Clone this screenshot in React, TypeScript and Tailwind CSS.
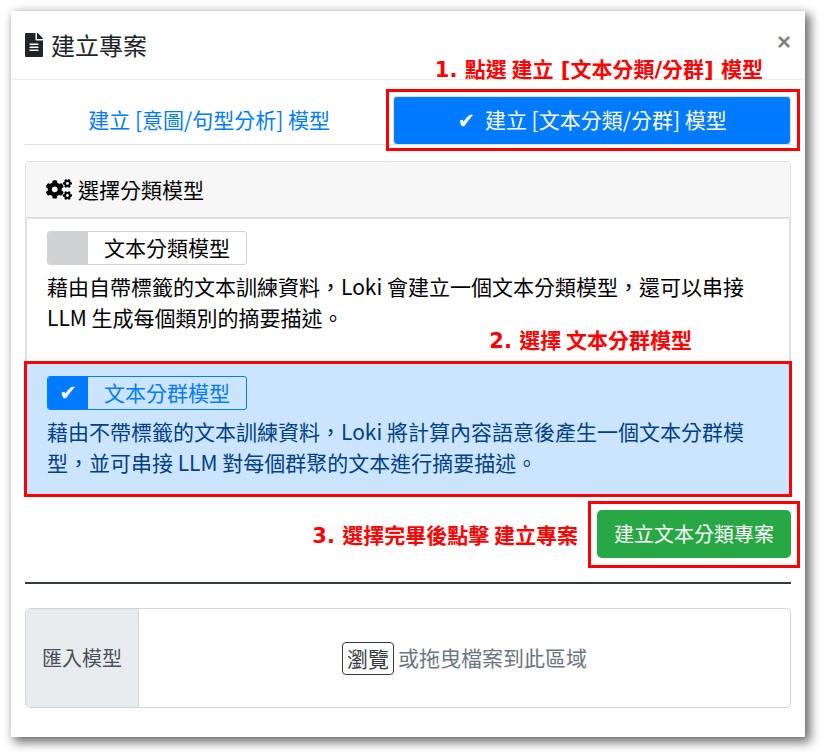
import { useState, type ReactNode } from "react";
import { FaCogs, FaFileAlt } from "react-icons/fa";

function Note({ number, children, className }: { number: number; children: ReactNode; className: string }) {
  return (
    <p
      className={`pointer-events-none absolute whitespace-pre font-['Noto_Sans_CJK_TC',sans-serif] text-[21px] leading-6 font-bold text-[#f00] ${className}`}
    >
      <span className="font-['DejaVu_Sans',sans-serif]">{number}. </span>
      {children}
    </p>
  );
}

function Latin({ children }: { children: ReactNode }) {
  return <span className="font-['DejaVu_Sans',sans-serif]">{children}</span>;
}

function Frame({ className }: { className: string }) {
  return <div className={`pointer-events-none absolute border-3 border-[#f00] ${className}`} />;
}

const tick =
  "before:font-['DejaVu_Sans',sans-serif] before:text-[21px] before:leading-none before:text-white checked:before:content-['✔']";

function ModelOption({
  title,
  text,
  checked,
  onSelect,
  className,
}: {
  title: string;
  text: string;
  checked: boolean;
  onSelect: () => void;
  className: string;
}) {
  return (
    <div
      className={`border px-5 pt-3 ${checked ? "border-[#b8daff] bg-[#cce5ff] text-[#004085]" : "border-black/12 bg-white text-black"} ${className}`}
    >
      <label
        className={`flex h-[34px] w-fit cursor-pointer overflow-hidden rounded-[3px] border ${checked ? "border-[#007bff] text-[#007bff]" : "border-[#d1d2d4]"}`}
      >
        <input
          type="radio"
          name="model"
          checked={checked}
          onChange={onSelect}
          className={`flex w-10 appearance-none items-center justify-center bg-[#d1d2d4] checked:bg-[#007bff] ${tick}`}
        />
        <span className="px-4 leading-[30px]">{title}</span>
      </label>
      <p className="mt-1.5 leading-[31px]">{text}</p>
    </div>
  );
}

export default function App() {
  const [model, setModel] = useState("cluster");
  return (
    <div className="bg-white pt-[11px] pr-[19px] pb-[19px] pl-[11px] font-['Noto_Sans_CJK_TC',sans-serif] text-[21px]">
      <section className="bg-white shadow-[4px_4px_10px_1px_rgba(0,0,0,0.6)]">
        <header className="flex items-start justify-between border-b border-[#e9ecef] px-3.5 pt-4 pb-4 text-[#212529]">
          <h1 className="flex items-center gap-2 text-2xl leading-9">
            <FaFileAlt className="h-6 w-[18px]" />
            建立專案
          </h1>
          <button
            type="button"
            aria-label="關閉"
            className="font-['Liberation_Sans',sans-serif] text-2xl leading-[30px] font-bold text-black/50"
          >
            ×
          </button>
        </header>

        <div className="px-3.5 pt-4 pb-[29px]">
          <div role="tablist" className="flex border-b border-[#dee2e6]">
            <button type="button" role="tab" aria-selected={false} className="h-12 flex-auto text-[#007bff]">
              建立 [意圖/句型分析] 模型
            </button>
            <div className="relative flex flex-auto">
              <button
                type="button"
                role="tab"
                aria-selected={true}
                className="h-12 flex-auto rounded-sm border border-b-0 border-[#dee2e6] bg-[#007bff] text-white"
              >
                <span className="mr-[5px] font-['DejaVu_Sans',sans-serif]">✔</span> 建立 [文本分類/分群] 模型
              </button>
              <Frame className="-top-[7px] -right-[9px] -bottom-[7px] -left-[7px]" />
              <Note number={1} className="right-7 bottom-full mb-3.5">
                點選 建立<Latin> [</Latin>文本分類<Latin>/</Latin>分群<Latin>] </Latin>模型
              </Note>
            </div>
          </div>

          <div className="mt-4 rounded-t-sm border border-b-0 border-black/12">
            <h2 className="flex h-14 items-center gap-1.5 border-b border-black/12 bg-[#f7f7f7] px-5 text-black">
              <FaCogs className="h-[21px] w-[26px]" />
              選擇分類模型
            </h2>
            <ModelOption
              title="文本分類模型"
              text="藉由自帶標籤的文本訓練資料，Loki 會建立一個文本分類模型，還可以串接 LLM 生成每個類別的摘要描述。"
              checked={model === "classify"}
              onSelect={() => setModel("classify")}
              className="rounded-t-sm border-b-0 pb-[30px]"
            />
            <div className="relative">
              <ModelOption
                title="文本分群模型"
                text="藉由不帶標籤的文本訓練資料，Loki 將計算內容語意後產生一個文本分群模型，並可串接 LLM 對每個群聚的文本進行摘要描述。"
                checked={model === "cluster"}
                onSelect={() => setModel("cluster")}
                className="pb-4"
              />
              <Frame className="-inset-x-0.5 -top-0.5 -bottom-0.5" />
              <Note number={2} className="right-[98px] bottom-full mb-2.5">
                選擇 文本分群模型
              </Note>
            </div>
          </div>

          <div className="mt-[15px] flex justify-end">
            <div className="relative">
              <button type="button" className="h-12 rounded-[5px] bg-[#28a745] px-[17px] text-xl text-white">
                建立文本分類專案
              </button>
              <Frame className="-inset-x-[9px] -top-[9px] -bottom-2.5" />
              <Note number={3} className="top-3 right-full mr-[19px]">
                選擇完畢後點擊 建立專案
              </Note>
            </div>
          </div>

          <hr className="mt-6 border-t-2 border-[#343a40]" />

          <div className="mt-6 flex h-[100px] overflow-hidden rounded-[5px] border border-[#ced4da]">
            <div className="flex items-center border-r border-[#ced4da] bg-[#e9ecef] px-4 text-xl text-[#495057]">
              匯入模型
            </div>
            <div className="flex flex-1 items-center justify-center gap-1 text-[#6c757d]">
              <button type="button" className="rounded-sm border border-[#343a40] px-1 leading-[31px] text-[#343a40]">
                瀏覽
              </button>
              或拖曳檔案到此區域
            </div>
          </div>
        </div>
      </section>
    </div>
  );
}
